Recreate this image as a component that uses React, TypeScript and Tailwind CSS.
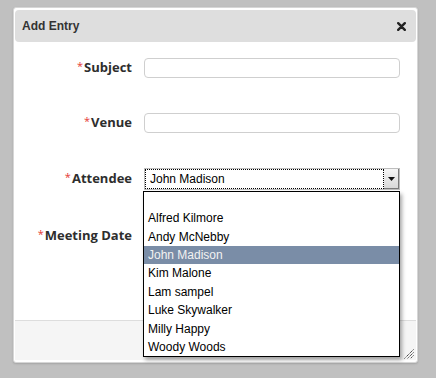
import React from "react";

const attendees = [
  "",
  "Alfred Kilmore",
  "Andy McNebby",
  "John Madison",
  "Kim Malone",
  "Lam sampel",
  "Luke Skywalker",
  "Milly Happy",
  "Woody Woods",
];

function Label({ text }: { text: string }) {
  return (
    <label className="w-[117px] shrink-0 text-right font-['Open_Sans',sans-serif] text-[13px] font-bold text-[#2e2e2e]">
      <span className="relative -top-[2px] mr-[1px] text-[11px] font-normal text-[#e53935]">*</span>
      {text}
    </label>
  );
}

function TextInput() {
  return <div className="h-[20px] w-[256px] rounded-[4px] border border-[#cfcfcf] bg-white" />;
}

function AttendeeSelect() {
  return (
    <div className="relative h-[22px] w-[256px]">
      <div className="flex h-full w-full border border-[#bdbdbd] bg-white">
        <div className="flex flex-1 items-center border border-dotted border-black pl-[4px] font-['Liberation_Sans',Arial,sans-serif] text-[12px] text-black">
          John Madison
        </div>
        <div className="flex w-[15px] items-center justify-center border-b border-r border-[#7a7a7a] bg-gradient-to-b from-[#f6f6f6] to-[#d9d9d9]">
          <svg width="7" height="4" viewBox="0 0 7 4">
            <path d="M0 0 H7 L3.5 4 Z" fill="#111" />
          </svg>
        </div>
      </div>

      {/* open option list */}
      <ul className="absolute left-[-1px] top-[23px] z-10 w-[257px] border border-black bg-white font-['Liberation_Sans',Arial,sans-serif] text-[12px] text-black shadow-[2px_3px_4px_rgba(0,0,0,0.35)]">
        {attendees.map((name, i) => (
          <li
            key={i}
            className={
              (i === 0 ? "h-[17px] " : "h-[18.4px] ") +
              "flex items-center pl-[4px] " +
              (name === "John Madison" ? "bg-[#7a8da7] text-[#f2f2f2]" : "")
            }
          >
            {name}
          </li>
        ))}
      </ul>
    </div>
  );
}

export default function App() {
  return (
    <div className="h-[378px] w-[436px] bg-[#c0c0c0] pl-[13px] pt-[7px]">
      <div className="relative flex h-[356px] w-[405px] flex-col rounded-[3px] border border-[#d6d6d6] bg-white px-[1px] pb-[2px] pt-[2px] shadow-[0_1px_2px_rgba(0,0,0,0.15)]">
        <div className="flex h-[32px] shrink-0 items-center justify-between rounded-[4px] bg-[#dedede] pl-[7px] pr-[10px]">
          <span className="font-['Liberation_Sans',Arial,sans-serif] text-[12px] font-bold text-[#333]">Add Entry</span>
          <svg width="9" height="9" viewBox="0 0 9 9">
            <path d="M1.2 1.2 L7.8 7.8 M7.8 1.2 L1.2 7.8" stroke="#222" strokeWidth="2.4" strokeLinecap="round" />
          </svg>
        </div>

        <div className="flex flex-1 flex-col gap-[35px] pt-[16px]">
          <div className="flex h-[20px] items-center gap-[12px]">
            <Label text="Subject" />
            <TextInput />
          </div>
          <div className="flex h-[20px] items-center gap-[12px]">
            <Label text="Venue" />
            <TextInput />
          </div>
          <div className="flex h-[22px] items-center gap-[12px]">
            <Label text="Attendee" />
            <AttendeeSelect />
          </div>
          <div className="flex h-[22px] items-center gap-[12px]">
            <Label text="Meeting Date" />
            <div className="h-[20px] w-[256px] rounded-[4px] border border-[#cfcfcf] bg-white" />
          </div>
        </div>

        <div className="h-[40px] shrink-0 border-t border-[#dddddd] bg-[#f5f5f5]" />

        <svg className="absolute bottom-[3px] right-[3px]" width="11" height="11" viewBox="0 0 11 11">
          <path d="M10.5 1.5 L1.5 10.5 M10.5 4.5 L4.5 10.5 M10.5 7.5 L7.5 10.5" stroke="#222" strokeWidth="1" strokeDasharray="1.2 0.8" />
        </svg>
      </div>
    </div>
  );
}
